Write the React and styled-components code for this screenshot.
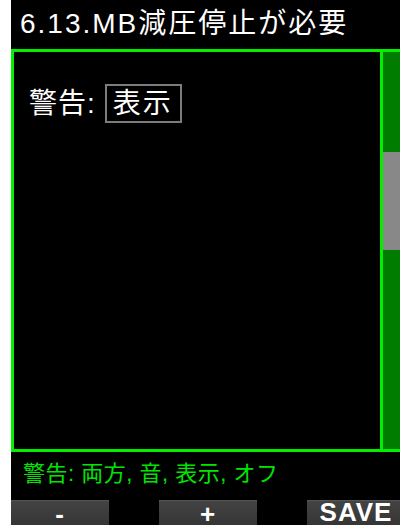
import React from "react";
import styled, { createGlobalStyle } from "styled-components";

const GlobalStyle = createGlobalStyle`
  html, body {
    margin: 0;
    padding: 0;
    background: #fff;
  }
  #root {
    width: 400px;
    height: 525px;
    overflow: hidden;
  }
`;

const Screen = styled.div`
  margin-left: 11px;
  width: 389px;
  height: 525px;
  background: #000;
  overflow: hidden;
  display: flex;
  flex-direction: column;
  font-family: "Liberation Sans", "Noto Sans CJK JP", sans-serif;
`;

const Title = styled.div`
  height: 49px;
  flex-shrink: 0;
  box-sizing: border-box;
  padding: 6px 0 0 9px;
  color: #fff;
  font-size: 28px;
  letter-spacing: 2px;
  line-height: 36px;
  white-space: nowrap;
`;

const Frame = styled.div`
  height: 403px;
  flex-shrink: 0;
  box-sizing: border-box;
  border: 3px solid #00f000;
  border-right: none;
  display: flex;
`;

const Content = styled.div`
  flex: 1;
  padding: 32px 0 0 15px;
  color: #fff;
`;

const Row = styled.div`
  display: flex;
  align-items: center;
  font-size: 28px;
  line-height: 36px;
`;

const Label = styled.span`
  letter-spacing: 1px;
`;

const ValueBox = styled.span`
  margin-left: 9px;
  padding: 0 7px 0 6px;
  border: 2px solid #7c7c7c;
  letter-spacing: 2px;
  line-height: 35px;
`;

const Track = styled.div`
  width: 20px;
  flex-shrink: 0;
  box-sizing: border-box;
  border-left: 3px solid #00f000;
  background: #007c00;
  padding-top: 100px;
`;

const Thumb = styled.div`
  height: 98px;
  background: #888;
`;

const Hint = styled.div`
  height: 48px;
  flex-shrink: 0;
  box-sizing: border-box;
  padding: 7px 0 0 12px;
  color: #00e600;
  font-size: 22px;
  letter-spacing: 0.5px;
  line-height: 30px;
  white-space: nowrap;
`;

const ButtonBar = styled.div`
  display: flex;
  gap: 50px;
  flex-shrink: 0;
`;

const Button = styled.div`
  width: 98px;
  height: 40px;
  flex-shrink: 0;
  box-sizing: border-box;
  background: linear-gradient(#434343, #2d2d2d);
  border-top: 1px solid #555;
  color: #fff;
  font-weight: bold;
  font-size: 26px;
  line-height: 22px;
  padding-top: ${(p) => p.$pt}px;
  text-align: center;
  letter-spacing: 1px;
`;

export default function App() {
  return (
    <>
      <GlobalStyle />
      <Screen>
        <Title>6.13.MB減圧停止が必要</Title>
        <Frame>
          <Content>
            <Row>
              <Label>警告:</Label>
              <ValueBox>表示</ValueBox>
            </Row>
          </Content>
          <Track>
            <Thumb />
          </Track>
        </Frame>
        <Hint>警告: 両方, 音, 表示, オフ</Hint>
        <ButtonBar>
          <Button $pt={2}>-</Button>
          <Button $pt={2}>+</Button>
          <Button $pt={0}>SAVE</Button>
        </ButtonBar>
      </Screen>
    </>
  );
}
